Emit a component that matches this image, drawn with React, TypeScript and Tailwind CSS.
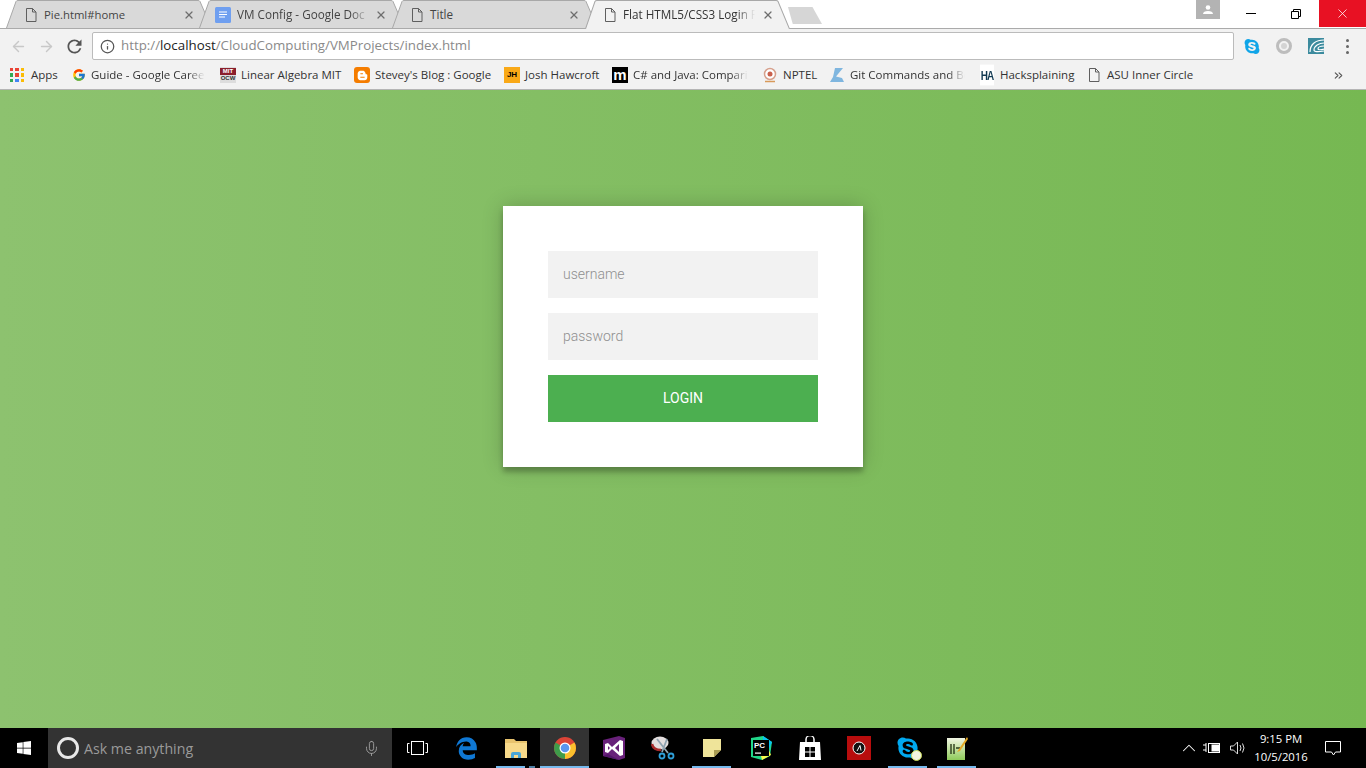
import React from "react";
import { FcGoogle } from "react-icons/fc";
import { FaBloggerB, FaSkype, FaWindows, FaEdgeLegacy } from "react-icons/fa";
import { ArrowLeft, ArrowRight, Info, X, Mic, ChevronUp, ChevronsRight } from "lucide-react";

const PageIcon = ({ className = "" }: { className?: string }) => (
  <svg width="12" height="14" viewBox="0 0 12 14" className={className} fill="none" stroke="#5f5f5f" strokeWidth="1">
    <path d="M1.5 .5h6l3.500 3.500v9.500h-9.500z" />
    <path d="M7.500 .5v3.500h3.500" />
  </svg>
);

const DocsIcon = () => (
  <svg width="16" height="16" viewBox="0 0 16 16">
    <rect width="16" height="16" rx="1.500" fill="#6f9ff0" />
    <path d="M4 5h8M4 7.500h8M4 10h6" stroke="#fff" strokeWidth="1.200" />
  </svg>
);

const tabs = [
  { title: "Pie.html#home", icon: <PageIcon />, width: "w-[206px]", pad: "pl-[19px]", gap: "gap-[7px]", text: "w-[136px] text-[11.300px]", closeMl: "-ml-[4px]", active: false, fade: false },
  { title: "VM Config - Google Doc", icon: <DocsIcon />, width: "w-[206px]", pad: "pl-[16px]", gap: "gap-[6px]", text: "w-[132px] text-[11.700px]", closeMl: "", active: false, fade: true },
  { title: "Title", icon: <PageIcon />, width: "w-[206px]", pad: "pl-[19px]", gap: "gap-[7px]", text: "w-[132px] text-[11.700px]", closeMl: "-ml-[1px]", active: false, fade: false },
  { title: "Flat HTML5/CSS3 Login F", icon: <PageIcon />, width: "w-[205px]", pad: "pl-[19px]", gap: "gap-[7px]", text: "w-[132px] text-[11.700px]", closeMl: "", active: true, fade: true },
];

const Tab = ({ tab, index }: { tab: (typeof tabs)[number]; index: number }) => (
  <div className={`relative shrink-0 ${tab.width} ${index === 0 ? "" : "-ml-[13px]"} ${tab.active ? "z-10 h-[29px]" : "h-[28px]"}`}>
    <svg className="absolute inset-0 h-full w-full" viewBox="0 0 206 28" preserveAspectRatio="none">
      <path
        d="M0.500 28 L10 1.500 Q10.500 .5 12 .5 H192 Q193.500 .5 194 1.500 L205.500 28"
        fill={tab.active ? "#f2f2f2" : "#d9d9d9"}
        stroke="#a8a8a8"
        strokeWidth="1"
      />
    </svg>
    <div className={`relative flex h-[28px] items-center pt-[2px] ${tab.pad} ${tab.gap}`}>
      {tab.icon}
      <span
        className={`${tab.text} whitespace-nowrap ${tab.active ? "text-[#333]" : "text-[#444]"} ${tab.fade ? "overflow-hidden [mask-image:linear-gradient(to_right,black_86%,transparent)]" : ""}`}
      >
        {tab.title}
      </span>
      <X size={12} strokeWidth={2.500} className={`text-[#6e6e6e] ${tab.closeMl}`} />
    </div>
  </div>
);

const AppsIcon = () => {
  const colors = ["#ea4335", "#ea4335", "#fbbc05", "#34a853", "#ea4335", "#fbbc05", "#34a853", "#4285f4", "#fbbc05"];
  return (
    <div className="grid h-[14px] w-[14px] grid-cols-3 gap-[2px]">
      {colors.map((c, i) => (
        <div key={i} style={{ backgroundColor: c }} />
      ))}
    </div>
  );
};

const bookmarks = [
  { label: "Apps", icon: <AppsIcon />, width: "w-[27px]", box: "w-[14px]", gap: "gap-[7px]", fade: false, mr: "mr-[14px]" },
  { label: "Guide - Google Caree", icon: <FcGoogle size={14} />, width: "w-[114px]", box: "w-[14px]", gap: "gap-[5px]", fade: true, mr: "mr-[15px]" },
  {
    label: "Linear Algebra MIT",
    icon: (
      <div className="flex h-[16px] w-[16px] flex-col items-center justify-center bg-[#ddd] font-['Liberation_Sans',sans-serif] text-[6px] font-bold leading-[7px]">
        <span className="w-full bg-[#8b1f2c] text-center text-white">MIT</span>
        <span className="text-[#333]">OCW</span>
      </div>
    ),
    width: "w-[100px]",
    box: "w-[16px]",
    gap: "gap-[5px]",
    fade: false,
    mr: "mr-[13px]",
  },
  {
    label: "Stevey's Blog : Google",
    icon: (
      <div className="flex h-[16px] w-[16px] items-center justify-center rounded-[3px] bg-[#f57d00]">
        <FaBloggerB size={11} className="text-white" />
      </div>
    ),
    width: "w-[117px]",
    box: "w-[16px]",
    gap: "gap-[5px]",
    fade: false,
    mr: "mr-[12px]",
  },
  {
    label: "Josh Hawcroft",
    icon: (
      <div className="flex h-[16px] w-[16px] items-center justify-center bg-[#f9a917] font-['Liberation_Sans',sans-serif] text-[8px] font-bold text-black">JH</div>
    ),
    width: "w-[75px]",
    box: "w-[16px]",
    gap: "gap-[5px]",
    fade: false,
    mr: "mr-[12px]",
  },
  {
    label: "C# and Java: Compari",
    icon: (
      <div className="flex h-[16px] w-[16px] items-center justify-center bg-black pb-[2px] font-['Liberation_Sans',sans-serif] text-[15px] font-bold leading-none text-white">m</div>
    ),
    width: "w-[115px]",
    box: "w-[16px]",
    gap: "gap-[5px]",
    fade: true,
    mr: "mr-[14px]",
  },
  {
    label: "NPTEL",
    icon: (
      <svg width="16" height="16" viewBox="0 0 16 16">
        <circle cx="8" cy="7" r="5.500" fill="#fff" stroke="#d6a08c" strokeWidth="1.500" />
        <circle cx="8" cy="7" r="2.500" fill="#c9604c" />
        <path d="M3 14.500h10" stroke="#d89a5a" strokeWidth="1.500" />
      </svg>
    ),
    width: "w-[34px]",
    box: "w-[16px]",
    gap: "gap-[5px]",
    fade: false,
    mr: "mr-[12px]",
  },
  {
    label: "Git Commands and Be",
    icon: (
      <svg width="16" height="16" viewBox="0 0 16 16">
        <path d="M6 1h8L7 9.500 13 11 15 15H1l3-5z" fill="#7fb6df" />
      </svg>
    ),
    width: "w-[115px]",
    box: "w-[16px]",
    gap: "gap-[5px]",
    fade: true,
    mr: "mr-[15px]",
  },
  {
    label: "Hacksplaining",
    icon: (
      <div className="flex h-[16px] w-[14px] items-center justify-center bg-white font-['Liberation_Sans',sans-serif] text-[10px] font-bold tracking-[-1px] text-[#123a52] [transform:scaleY(1.300)]">HA</div>
    ),
    width: "w-[74px]",
    box: "w-[14px]",
    gap: "gap-[6px]",
    fade: false,
    mr: "mr-[14px]",
  },
  { label: "ASU Inner Circle", icon: <PageIcon />, width: "w-[85px]", box: "w-[12px]", gap: "gap-[7px]", fade: false, mr: "" },
];

const Chrome = () => (
  <svg width="24" height="24" viewBox="0 0 24 24">
    <circle cx="12" cy="12" r="11" fill="#db4437" />
    <path d="M12 12 L21.500 6.500 A11 11 0 0 1 12 23z" fill="#fbc02d" />
    <path d="M12 12 L12 23 A11 11 0 0 1 2.500 6.500z" fill="#3e9c4a" />
    <circle cx="12" cy="12" r="5.500" fill="#fff" />
    <circle cx="12" cy="12" r="4.300" fill="#5a96ee" />
  </svg>
);

const Explorer = () => (
  <svg width="22" height="20" viewBox="0 0 22 20">
    <path d="M0 1h9l2 2h11v3H0z" fill="#e8c36e" />
    <rect x="0" y="5" width="22" height="15" fill="#f7d98a" />
    <path d="M6 20v-4a2 2 0 0 1 2-2h6a2 2 0 0 1 2 2v4h-3v-3H9v3z" fill="#49a6d6" />
  </svg>
);

const VisualStudio = () => (
  <svg width="22" height="24" viewBox="0 0 22 24">
    <path d="M0 4 16 0l6 2v20l-6 2L0 20z" fill="#68217a" />
    <path d="M2 8l3-1 4 4 8-7 3 1v14l-3 1-8-7-4 4-3-1zM5 10v4l2-2zM16 8l-4 4 4 4z" fill="#fff" />
    <path d="M0 20l5-2 11 6z" fill="#52166a" />
  </svg>
);

const Snipping = () => (
  <svg width="24" height="24" viewBox="0 0 24 24">
    <ellipse cx="9" cy="7" rx="8.500" ry="6.500" fill="#e3dede" />
    <path d="M1 8c1 5 6 6 9 6" stroke="#a72a2a" strokeWidth="2.500" fill="none" />
    <path d="M6 3l11 14M16 3 11 16" stroke="#8fa3b0" strokeWidth="1.800" />
    <circle cx="11" cy="20" r="2.500" fill="none" stroke="#2f9fd8" strokeWidth="1.800" />
    <circle cx="20" cy="20" r="2.500" fill="none" stroke="#2f9fd8" strokeWidth="1.800" />
  </svg>
);

const Sticky = () => (
  <svg width="18" height="18" viewBox="0 0 18 18">
    <path d="M0 0h18v11l-7 7H0z" fill="#efe49a" />
    <path d="M18 11h-7v7z" fill="#a99c52" />
  </svg>
);

const PyCharm = () => (
  <svg width="24" height="24" viewBox="0 0 24 24">
    <path d="M2 2 14 0l9 6-2 14-8 4-11-3z" fill="#21d789" />
    <path d="M14 0l9 6-3 7-6-6z" fill="#07c3f2" />
    <path d="M13 24l9-5-3-7-8 4z" fill="#fcf84a" />
    <rect x="4" y="4" width="16" height="16" fill="#000" />
    <text x="5" y="12" fill="#fff" fontSize="8" fontWeight="700" fontFamily="Liberation Sans">PC</text>
    <rect x="6" y="16.500" width="6" height="1.200" fill="#fff" />
  </svg>
);

const Store = () => (
  <svg width="22" height="24" viewBox="0 0 22 24">
    <path d="M7 6V3.500a4 4 0 0 1 8 0V6" fill="none" stroke="#fff" strokeWidth="1.500" />
    <path d="M1 6h20l1 18H0zM6 11v4.500h4.500V11zM11.500 11v4.500H16V11zM6 16.500V21h4.500v-4.500zM11.500 16.500V21H16v-4.500z" fill="#fff" fillRule="evenodd" />
  </svg>
);

const RedApp = () => (
  <div className="flex h-[24px] w-[24px] items-center justify-center bg-[#b80d0d]">
    <svg width="14" height="14" viewBox="0 0 14 14" fill="#111" stroke="#fff">
      <circle cx="7" cy="7" r="6" />
      <path d="M5 10 8 4.500 9 9.500" fill="none" />
    </svg>
  </div>
);

const SkypeTask = () => (
  <div className="relative h-[24px] w-[24px]">
    <FaSkype size={24} className="text-[#00a9f0]" />
    <div className="absolute right-[-2px] bottom-[-1px] h-[11px] w-[11px] rounded-full border border-[#c6d655] bg-[#f3f5e0]" />
  </div>
);

const NotepadPP = () => (
  <svg width="22" height="24" viewBox="0 0 22 24">
    <defs>
      <linearGradient id="npp" x1="0" y1="0" x2="0" y2="1">
        <stop offset="0" stopColor="#f1f5e4" />
        <stop offset="1" stopColor="#8fcb5a" />
      </linearGradient>
    </defs>
    <rect x="1" y="2" width="18" height="22" fill="url(#npp)" />
    <path d="M5 8v10M8 8v10M10 12h4" stroke="#2c3a1c" strokeWidth="1.400" />
    <path d="M21 1 13 13l-2 3 3-1 8-12z" fill="#e5a823" />
  </svg>
);

const taskItems = [
  { key: "edge", node: <FaEdgeLegacy size={23} className="text-[#0f78d4]" />, bar: "" },
  { key: "explorer", node: <Explorer />, bar: "explorer" },
  { key: "chrome", node: <Chrome />, bar: "active" },
  { key: "vs", node: <VisualStudio />, bar: "" },
  { key: "snip", node: <Snipping />, bar: "" },
  { key: "sticky", node: <Sticky />, bar: "open" },
  { key: "pycharm", node: <PyCharm />, bar: "" },
  { key: "store", node: <Store />, bar: "" },
  { key: "red", node: <RedApp />, bar: "" },
  { key: "skype", node: <SkypeTask />, bar: "open" },
  { key: "npp", node: <NotepadPP />, bar: "open" },
];

export default function App() {
  return (
    <div className="flex h-screen w-[1366px] flex-col overflow-hidden bg-white font-['Open_Sans',sans-serif]">
      {/* tab strip */}
      <div className="relative z-10 flex h-[28px] shrink-0 items-start bg-white pl-[6px]">
        <div className="flex items-start">
          {tabs.map((t, i) => (
            <Tab key={t.title} tab={t} index={i} />
          ))}
        </div>
        <div className="ml-[-2px] mt-[7px] h-[17px] w-[34px] bg-[#d6d6d6] [clip-path:polygon(0_0,72%_0,100%_100%,14%_100%)]" />
        <div className="ml-auto flex h-full items-start">
          <div className="flex h-[19px] w-[24px] items-center justify-center bg-[#b3b3b3]">
            <svg width="10" height="10" viewBox="0 0 10 10" fill="#fff">
              <circle cx="5" cy="2.500" r="2.300" />
              <path d="M0 9c0-2 2-3 5-3s5 1 5 3z" />
            </svg>
          </div>
          <div className="ml-[9px] flex h-[27px] w-[44px] items-center justify-center">
            <div className="h-[1px] w-[10px] bg-black" />
          </div>
          <div className="flex h-[27px] w-[46px] items-center justify-center">
            <svg width="10" height="10" viewBox="0 0 10 10" fill="none" stroke="#000">
              <path d="M.5 2.500h7v7h-7zM2.500 2.500v-2h7v7h-2" />
            </svg>
          </div>
          <div className="flex h-[27px] w-[47px] items-center justify-center bg-[#e81123]">
            <X size={15} strokeWidth={1.200} className="text-white" />
          </div>
        </div>
      </div>

      {/* toolbar */}
      <div className="flex h-[34px] shrink-0 items-center border-t border-[#aaaaaa] bg-[#f2f2f2] pt-[1px]">
        <ArrowLeft size={17} className="ml-[10px] text-[#c8c8c8]" />
        <ArrowRight size={17} className="ml-[11px] text-[#c8c8c8]" />
        <svg width="21" height="21" viewBox="0 0 24 24" fill="#555" className="ml-[9px]">
          <path d="M17.650 6.350A7.958 7.958 0 0 0 12 4c-4.420 0-7.990 3.580-7.990 8s3.570 8 7.990 8c3.730 0 6.840-2.550 7.730-6h-2.080A5.990 5.990 0 0 1 12 18c-3.310 0-6-2.690-6-6s2.690-6 6-6c1.660 0 3.140.690 4.220 1.780L13 11h7V4l-2.350 2.350z" />
        </svg>
        <div className="ml-[7px] flex h-[28px] w-[1142px] items-center rounded-[2px] border border-[#bbbbbb] bg-white pl-[7px]">
          <Info size={15} strokeWidth={2} className="text-[#555]" />
          <span className="ml-[6px] text-[13.300px] text-[#8a8a8a]">
            http://<span className="text-[#222]">localhost</span>/CloudComputing/VMProjects/index.html
          </span>
        </div>
        <div className="ml-[10px] flex h-[16px] w-[16px] items-center justify-center">
          <FaSkype size={17} className="text-[#10a5e8]" />
        </div>
        <div className="ml-[16px] flex h-[16px] w-[16px] items-center justify-center rounded-full border-[3px] border-[#bdbdbd]">
          <div className="h-[6px] w-[6px] rounded-full bg-[#d4d4d4]" />
        </div>
        <div className="ml-[16px] h-[16px] w-[16px] overflow-hidden bg-[#3c8b9e]">
          <svg width="16" height="16" viewBox="0 0 16 16" fill="none" stroke="#fff" strokeWidth="1.200">
            <path d="M16 2C8 2 2 6 2 14M16 5c-5 0-10 3-10 7 0 2 4 2 10 1M16 8c-3 0-6 1-6 3 0 1 3 1 6 0" />
          </svg>
        </div>
        <div className="ml-[22px] flex flex-col gap-[3px]">
          <div className="h-[3px] w-[3px] rounded-full bg-[#666]" />
          <div className="h-[3px] w-[3px] rounded-full bg-[#666]" />
          <div className="h-[3px] w-[3px] rounded-full bg-[#666]" />
        </div>
      </div>

      {/* bookmarks bar */}
      <div className="flex h-[28px] shrink-0 items-center border-b border-[#b5b5b5] bg-[#f2f2f2] pb-[1px] pl-[10px] text-[11.500px] text-[#333]">
        {bookmarks.map((b) => (
          <div key={b.label} className={`flex items-center ${b.gap} ${b.mr}`}>
            <div className={`flex items-center justify-center ${b.box}`}>{b.icon}</div>
            <span
              className={`${b.width} whitespace-nowrap ${b.fade ? "overflow-hidden [mask-image:linear-gradient(to_right,black_85%,transparent)]" : ""}`}
            >
              {b.label}
            </span>
          </div>
        ))}
        <ChevronsRight size={13} strokeWidth={2} className="ml-auto mr-[21px] text-[#555]" />
      </div>

      {/* page */}
      <div className="flex min-h-0 flex-1 flex-col items-center bg-gradient-to-l from-[#76b852] to-[#8dc26f] pt-[116px] font-['Roboto',sans-serif]">
        <form className="flex h-[261px] w-[360px] flex-col gap-[15px] bg-white p-[45px] shadow-[0_0_20px_rgba(0,0,0,0.2),0_5px_5px_rgba(0,0,0,0.24)]">
          <input
            readOnly
            placeholder="username"
            className="h-[47px] w-full bg-[#f2f2f2] px-[15px] pb-[2px] text-[14px] font-light outline-none placeholder:text-[#8f8f8f]"
          />
          <input
            readOnly
            placeholder="password"
            className="h-[47px] w-full bg-[#f2f2f2] px-[15px] pb-[2px] text-[14px] font-light outline-none placeholder:text-[#8f8f8f]"
          />
          <button type="button" className="h-[47px] w-full bg-[#4caf50] text-[14px] uppercase text-white">
            login
          </button>
        </form>
      </div>

      {/* taskbar */}
      <div className="flex h-[40px] shrink-0 items-stretch bg-black">
        <div className="flex w-[48px] items-center justify-center">
          <FaWindows size={16} className="text-white" />
        </div>
        <div className="flex w-[344px] items-center bg-[#333333] pl-[9px]">
          <div className="h-[22px] w-[22px] rounded-full border-[3px] border-[#e8e8e8]" />
          <span className="ml-[5px] pt-[1px] text-[14.200px] text-[#9a9a9a]">Ask me anything</span>
          <Mic size={17} strokeWidth={1.200} className="ml-auto mr-[12px] text-[#a8a8a8]" />
        </div>
        <div className="flex w-[50px] items-center justify-center">
          <svg width="21" height="14" viewBox="0 0 21 14" fill="none" stroke="#fff">
            <rect x="4.500" y=".5" width="12" height="13" />
            <path d="M2.500 2.500h-2v9h2M18.500 2.500h2v9h-2" />
          </svg>
        </div>
        {taskItems.map((t) => (
          <div
            key={t.key}
            className={`relative flex w-[49px] items-center justify-center ${t.bar === "active" ? "bg-[#333333]" : ""}`}
          >
            {t.node}
            {t.bar === "active" && <div className="absolute inset-x-0 bottom-0 h-[2px] bg-[#76b9ed]" />}
            {t.bar === "open" && <div className="absolute inset-x-[5px] bottom-0 h-[2px] bg-[#76b9ed]" />}
            {t.bar === "explorer" && (
              <div className="absolute inset-x-[5px] bottom-0 flex h-[2px] gap-[4px]">
                <div className="w-[30px] bg-[#76b9ed]" />
                <div className="w-[6px] bg-[#4d7ea3]" />
              </div>
            )}
          </div>
        ))}
        <div className="ml-auto flex items-center text-white">
          <ChevronUp size={22} strokeWidth={1.100} />
          <svg width="18" height="12" viewBox="0 0 18 12" className="ml-[3px]" fill="none" stroke="#fff">
            <rect x="5.500" y="1.500" width="11" height="9" />
            <rect x="9" y="3" width="7" height="6" fill="#fff" />
            <path d="M0 3h3M0 8h3M3 1v9" />
          </svg>
          <svg width="16" height="14" viewBox="0 0 16 14" className="ml-[9px]" fill="none" stroke="#ddd">
            <path d="M.5 5h3l4-4v12l-4-4h-3zM10 4q2 3 0 6M12.500 2.500q3 4.500 0 9" />
          </svg>
          <div className="ml-[3px] flex w-[64px] flex-col items-center text-[11.300px] leading-[18px]">
            <span>9:15 PM</span>
            <span>10/5/2016</span>
          </div>
          <svg width="16" height="15" viewBox="0 0 16 15" className="ml-[12px] mr-[25px]" fill="none" stroke="#fff">
            <path d="M.5 .5h15v10.500h-5l-2 3-2-3h-6z" />
          </svg>
        </div>
      </div>
    </div>
  );
}
